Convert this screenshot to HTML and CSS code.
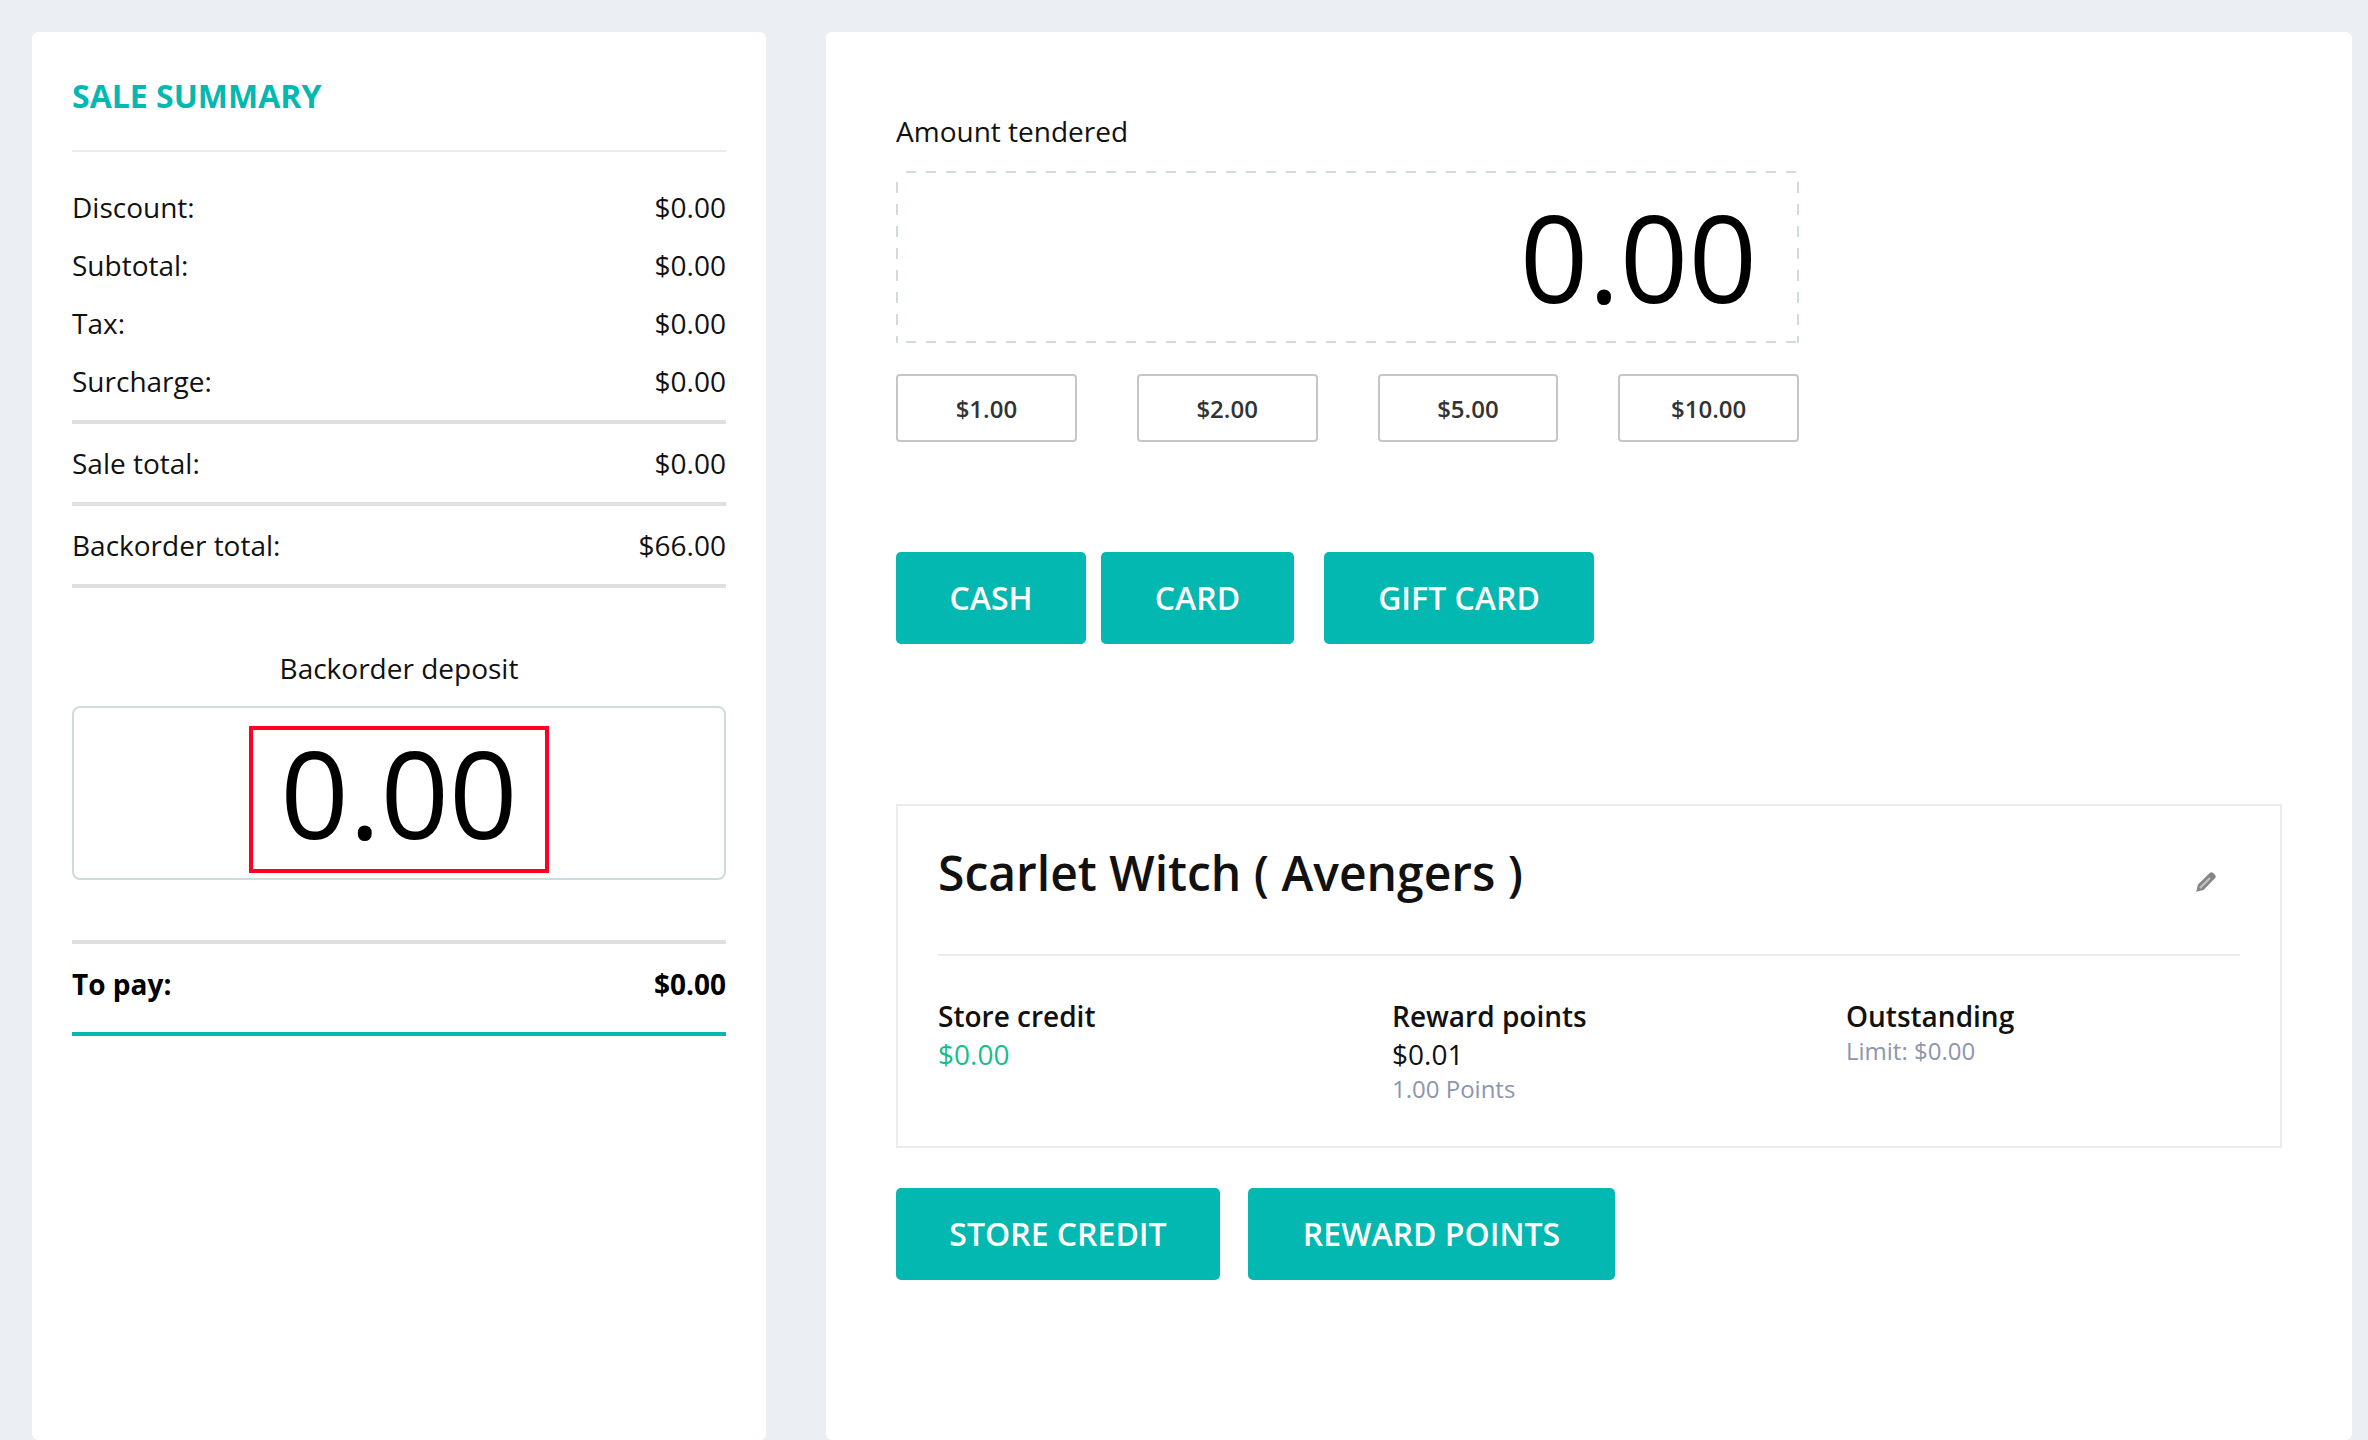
FILE: index.html
```html
<!DOCTYPE html>
<html lang="en">
<head>
<meta charset="utf-8">
<title>Sale summary</title>
<link rel="stylesheet" href="styles.css">
</head>
<body>
<div class="page">
  <aside class="card summary">
    <h2 class="summary-title">SALE SUMMARY</h2>
    <div class="summary-group">
      <div class="row"><span>Discount:</span><span>$0.00</span></div>
      <div class="row"><span>Subtotal:</span><span>$0.00</span></div>
      <div class="row"><span>Tax:</span><span>$0.00</span></div>
      <div class="row"><span>Surcharge:</span><span>$0.00</span></div>
    </div>
    <div class="row total"><span>Sale total:</span><span>$0.00</span></div>
    <div class="row total"><span>Backorder total:</span><span>$66.00</span></div>
    <div class="deposit-label">Backorder deposit</div>
    <div class="deposit-box"><div class="deposit-value">0.00</div></div>
    <div class="row to-pay"><span>To pay:</span><span>$0.00</span></div>
  </aside>
  <main class="card payment">
    <div class="tender">
      <div class="tender-label">Amount tendered</div>
      <div class="tender-box">0.00</div>
      <div class="quick-row">
        <button class="quick">$1.00</button>
        <button class="quick">$2.00</button>
        <button class="quick">$5.00</button>
        <button class="quick">$10.00</button>
      </div>
    </div>
    <div class="pay-row">
      <button class="pay pay-cash">CASH</button>
      <button class="pay pay-card">CARD</button>
      <button class="pay pay-gift">GIFT CARD</button>
    </div>
    <section class="customer">
      <div class="customer-head">
        <h3 class="customer-name">Scarlet Witch ( Avengers )</h3>
        <svg class="pencil" width="20" height="20" viewBox="0 0 20 20" aria-hidden="true">
          <path d="M0.2 19.8 L2 12.5 L14 0.8 Q15.5 -0.2 17 0.8 L19.2 3 Q20.2 4.5 19.2 6 L7.5 18 Z" fill="#858585"/>
          <path d="M4 16 L14 6" stroke="#c4c4c4" stroke-width="2" fill="none"/>
        </svg>
      </div>
      <div class="customer-stats">
        <div class="stat">
          <div class="stat-title">Store credit</div>
          <div class="stat-value green">$0.00</div>
        </div>
        <div class="stat">
          <div class="stat-title">Reward points</div>
          <div class="stat-value">$0.01</div>
          <div class="stat-note">1.00 Points</div>
        </div>
        <div class="stat">
          <div class="stat-title">Outstanding</div>
          <div class="stat-note">Limit: $0.00</div>
        </div>
      </div>
    </section>
    <div class="credit-row">
      <button class="pay pay-store">STORE CREDIT</button>
      <button class="pay pay-reward">REWARD POINTS</button>
    </div>
  </main>
</div>
</body>
</html>
```
FILE: styles.css
```css
* { box-sizing: border-box; }
html, body { margin: 0; height: 1440px; overflow: hidden; }
body {
  background: #ebeef3;
  font-family: "Open Sans", "Liberation Sans", sans-serif;
  font-size: 28px;
  line-height: 38px;
  color: #111;
}
.page {
  display: flex;
  gap: 60px;
  padding: 32px 16px 0 32px;
  height: 1440px;
}
.card {
  background: #fff;
  border-radius: 6px;
  min-height: 1408px;
}
.summary {
  flex: 0 0 734px;
  padding: 45px 40px 0;
}
.summary-title {
  margin: 0;
  padding-bottom: 35px;
  border-bottom: 2px solid #ebebeb;
  font-size: 32px;
  line-height: 38px;
  font-weight: 700;
  color: #02b8b0;
}
.row {
  display: flex;
  justify-content: space-between;
  align-items: center;
  height: 58px;
  padding-bottom: 2px;
}
.summary-group {
  margin-top: 27px;
  padding-bottom: 9px;
  border-bottom: 4px solid #dfdfdf;
}
.total {
  height: 82px;
  padding: 10px 0;
  border-bottom: 4px solid #dfdfdf;
}
.deposit-label {
  margin-top: 61px;
  text-align: center;
}
.deposit-box {
  display: flex;
  justify-content: center;
  height: 174px;
  margin-top: 19px;
  padding-top: 18px;
  border: 2px solid #cfdcdc;
  border-radius: 8px;
}
.deposit-value {
  width: 300px;
  height: 147px;
  border: 4px solid #ff0022;
  font-size: 120px;
  line-height: 125px;
  text-align: center;
  color: #000;
}
.to-pay {
  height: 96px;
  margin-top: 60px;
  padding: 21px 0 29px;
  border-top: 4px solid #dfdfdf;
  border-bottom: 4px solid #02b8b0;
  font-weight: 700;
  color: #000;
}
.payment {
  flex: 1;
  padding: 80px 70px 0 70px;
}
.tender { width: 903px; }
.tender-box {
  height: 172px;
  margin-top: 21px;
  padding: 0 42px;
  font-size: 120px;
  line-height: 171px;
  text-align: right;
  color: #000;
  background-image:
    repeating-linear-gradient(90deg, #cfdcdc 0 10px, transparent 10px 20px),
    repeating-linear-gradient(90deg, #cfdcdc 0 10px, transparent 10px 20px),
    repeating-linear-gradient(180deg, #cfdcdc 0 11px, transparent 11px 22px),
    repeating-linear-gradient(180deg, #cfdcdc 0 11px, transparent 11px 22px);
  background-size: 100% 2px, 100% 2px, 2px 100%, 2px 100%;
  background-position: 10px 0, 10px 100%, 0 11px, 100% 11px;
  background-repeat: no-repeat;
}
.quick-row {
  display: flex;
  gap: 60px;
  margin-top: 31px;
}
.quick {
  flex: 1;
  height: 68px;
  padding: 2px 0 0;
  background: #fff;
  border: 2px solid #c6c6c6;
  border-radius: 4px;
  font: 600 24px/1 "Open Sans", "Liberation Sans", sans-serif;
  color: #333;
}
.pay {
  height: 92px;
  padding: 0;
  background: #02b8b0;
  border: 0;
  border-radius: 5px;
  font: 600 32px/1 "Open Sans", "Liberation Sans", sans-serif;
  color: #fff;
}
.pay-row {
  display: flex;
  margin-top: 110px;
}
.pay-cash { width: 190px; margin-right: 15px; }
.pay-card { width: 193px; margin-right: 30px; }
.pay-gift { width: 270px; }
.customer {
  height: 344px;
  margin-top: 160px;
  padding: 0 40px;
  border: 2px solid #e8ecef;
}
.customer-head {
  display: flex;
  justify-content: space-between;
  align-items: center;
  height: 150px;
  padding: 0 24px 15px 0;
  border-bottom: 2px solid #e8ecef;
}
.customer-name {
  margin: 0;
  font-size: 48px;
  line-height: 64px;
  font-weight: 600;
  color: #111;
}
.pencil { margin-top: 19px; }
.customer-stats {
  display: grid;
  grid-template-columns: 454px 454px 1fr;
  padding-top: 41px;
}
.stat-title {
  font-weight: 600;
  color: #111;
}
.stat-value { color: #111; }
.green { color: #1abc8c; }
.stat-note {
  font-size: 24px;
  line-height: 32px;
  color: #8c96ad;
}
.credit-row {
  display: flex;
  gap: 28px;
  margin-top: 40px;
}
.pay-store { width: 324px; }
.pay-reward { width: 367px; }
```
